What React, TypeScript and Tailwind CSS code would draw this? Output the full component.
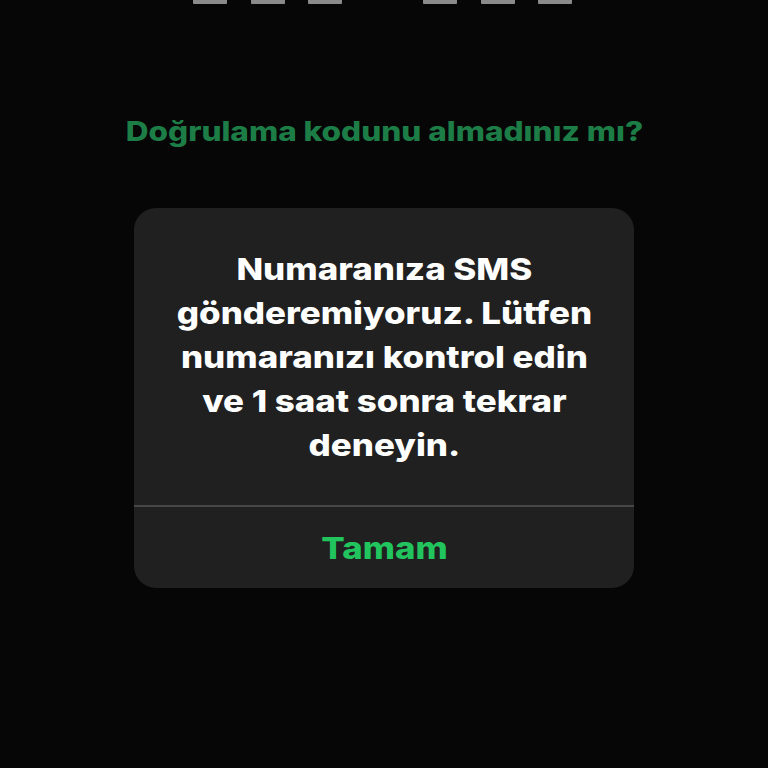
import React from "react";

export default function App() {
  const bars = [0, 1, 2];
  return (
    <div
      className="w-[768px] h-[768px] bg-[#060606] overflow-hidden flex flex-col items-center"
      style={{ fontFamily: "Inter, 'Noto Sans', sans-serif" }}
    >
      <div className="flex gap-[81px] h-[4px] mr-[3px]">
        <div className="flex gap-[23.5px]">
          {bars.map((i) => (
            <div key={i} className="w-[34px] h-[3.5px] bg-[#8a8a8a] rounded-b-[1px]" />
          ))}
        </div>
        <div className="flex gap-[23.5px]">
          {bars.map((i) => (
            <div key={i} className="w-[34px] h-[3.5px] bg-[#8a8a8a] rounded-b-[1px]" />
          ))}
        </div>
      </div>
      <div className="mt-[111px] text-[26.5px] leading-[32px] font-extrabold text-[#1d7d46] whitespace-nowrap scale-x-[1.19]">
        Doğrulama kodunu almadınız mı?
      </div>
      <div className="mt-[61px] w-[500px] rounded-[22px] bg-[#202020] flex flex-col">
        <div className="h-[297px] flex items-center justify-center px-8">
          <p className="text-center text-white font-extrabold text-[30.5px] leading-[44px] whitespace-nowrap scale-x-[1.145]">
            Numaranıza SMS
            <br />
            gönderemiyoruz. Lütfen
            <br />
            numaranızı kontrol edin
            <br />
            ve 1 saat sonra tekrar
            <br />
            deneyin.
          </p>
        </div>
        <div className="h-[2px] bg-[#474747]" />
        <div className="h-[81px] flex items-center justify-center">
          <span className="text-[30.5px] font-extrabold text-[#22c45e] scale-x-[1.14]">Tamam</span>
        </div>
      </div>
    </div>
  );
}
